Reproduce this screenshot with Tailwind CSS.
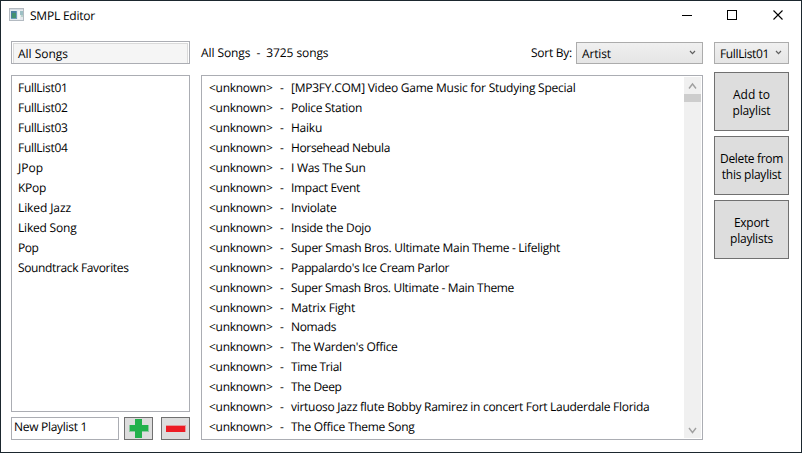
<!DOCTYPE html>
<html lang="en">
<head>
<meta charset="utf-8">
<title>SMPL Editor</title>
<script src="https://cdn.jsdelivr.net/npm/@tailwindcss/browser@4"></script>
</head>
<body class="w-[802px] h-[453px] overflow-hidden bg-white font-['Open_Sans','Noto_Sans',sans-serif] text-[12px] leading-4 text-black [text-rendering:geometricPrecision]">
<div class="w-[802px] h-[453px] border border-[#1b272e] flex flex-col whitespace-nowrap">
  <header class="h-[40px] shrink-0 flex items-start pl-2">
    <svg class="mt-[7px] w-[15px] h-[13px] shrink-0" viewBox="0 0 15 13" shape-rendering="crispEdges">
      <rect width="15" height="13" fill="#b3bac1"/><rect x="1" y="1" width="13" height="1" fill="#d5dce2"/><rect x="1" y="2" width="13" height="10" fill="#e6eaee"/>
      <rect x="2" y="3" width="6" height="8" fill="#6f9dbb"/><rect x="2" y="3" width="5" height="7" fill="#4b7fa0"/><rect x="3" y="5" width="4" height="5" fill="#44916f"/><rect x="9" y="3" width="2" height="8" fill="#f3f5f7"/><rect x="11" y="3" width="3" height="4" fill="#9dbfc4"/><rect x="12" y="7" width="2" height="2" fill="#b9d2cb"/>
    </svg>
    <span class="ml-[6px] mt-[7px]" data-w="65">SMPL Editor</span>
    <svg class="ml-auto mr-[17px] mt-[8px] w-[102px] h-[12px] shrink-0" viewBox="0 0 102 12" fill="none" stroke="#000">
      <path d="M0 6.500H10M45.500 1.500H54.500V10.500H45.500Z" shape-rendering="crispEdges"/><path d="M91.500 1.500L100.500 10.500M100.500 1.500L91.500 10.500" stroke-width="1.100"/>
    </svg>
  </header>
  <main class="flex pl-[10px] items-start">
    <section class="w-[179px] flex flex-col">
      <div class="h-[23px] border border-[#abadb3] p-px pb-0"><div class="h-[20px] border border-b-0 border-[#dadada] bg-[#f5f5f5] pl-1 pt-[2px]"><span class="inline-block" data-w="50">All Songs</span></div></div>
      <div id="playlists" class="mt-[11px] h-[337px] border border-[#abadb3] pt-[4px] pl-[6px]"></div>
      <div class="mt-[5px] flex h-[23px]">
        <div class="w-[108px] border border-[#abadb3] pl-[2px] pt-px"><span class="inline-block" data-w="73">New Playlist 1</span></div>
        <button class="ml-[5px] w-[29px] border border-[#707070] bg-[#ddd]"><svg class="w-[27px] h-[21px]" viewBox="0 0 27 21" shape-rendering="crispEdges"><path d="M4 7h20v7H4z" fill="#8cc9a0"/><path d="M10 1h7v6h6v6h-6v7h-7v-7h-5v-6h5z" fill="#22b14c"/></svg></button>
        <button class="ml-[8px] w-[29px] border border-[#707070] bg-[#ddd]"><svg class="w-[27px] h-[21px]" viewBox="0 0 27 21" shape-rendering="crispEdges"><path d="M4 7h20v7H4z" fill="#e49a9c"/><path d="M4 8h19v6H4z" fill="#ed1c24"/></svg></button>
      </div>
    </section>
    <section class="ml-[11px] w-[502px] flex flex-col">
      <div class="h-[34px] flex items-start">
        <span class="mt-[4px]" data-w="127.5">All Songs&nbsp; -&nbsp; 3725 songs</span>
        <span class="ml-auto mr-[4px] mt-[4px]" data-w="41">Sort By:</span>
        <div class="mt-px w-[127px] h-[22px] border border-[#acacac] bg-linear-to-b from-[#f0f0f0] to-[#e5e5e5] flex justify-between pl-[5px] pt-[3px]"><span data-w="29">Artist</span>
          <svg class="mt-[4px] mr-[6px] w-[7px] h-[5px]" viewBox="0 0 7 5" fill="none" stroke="#606060" stroke-width="1.200"><path d="M1 1L3.500 3.700L6 1"/></svg></div>
      </div>
      <div class="h-[365px] border border-[#abadb3] flex p-px pl-[7px]">
        <div id="songs" class="flex-1 pt-[3.1px]"></div>
        <div class="w-[17px] bg-[#f0f0f0] flex flex-col">
          <svg class="w-[17px] h-[17px]" viewBox="0 0 17 17" fill="none" stroke="#a0a0a0" stroke-width="1.400"><path d="M5 11.500L8.500 7L12 11.500"/></svg>
          <div class="h-[8px] bg-[#cdcdcd]"></div>
          <svg class="mt-auto w-[17px] h-[17px]" viewBox="0 0 17 17" fill="none" stroke="#a0a0a0" stroke-width="1.400"><path d="M5 7L8.500 11.500L12 7"/></svg>
        </div>
      </div>
    </section>
    <section class="ml-[11px] w-[75px] flex flex-col pt-px">
      <div class="h-[22px] border border-[#acacac] bg-linear-to-b from-[#f0f0f0] to-[#e5e5e5] flex justify-between pl-[5px] pt-[3px]"><span data-w="49">FullList01</span>
        <svg class="mt-[4px] mr-[6px] w-[7px] h-[5px]" viewBox="0 0 7 5" fill="none" stroke="#606060" stroke-width="1.200"><path d="M1 1L3.500 3.700L6 1"/></svg></div>
      <button class="mt-[8px] h-[59px] border border-[#707070] bg-[#ddd] flex flex-col items-center justify-center pt-[2px]"><span data-w="37">Add to</span><span data-w="38">playlist</span></button>
      <button class="mt-[5px] h-[59px] border border-[#707070] bg-[#ddd] flex flex-col items-center justify-center pt-[2px]"><span data-w="63">Delete from</span><span data-w="59.5">this playlist</span></button>
      <button class="mt-[5px] h-[59px] border border-[#707070] bg-[#ddd] flex flex-col items-center justify-center pt-[2px]"><span data-w="35">Export</span><span data-w="43">playlists</span></button>
    </section>
  </main>
</div>
<script>
const playlists = [["FullList01",49.5],["FullList02",49.5],["FullList03",49.5],["FullList04",49.5],["JPop",25],["KPop",28],["Liked Jazz",53],["Liked Song",58.5],["Pop",20.5],["Soundtrack Favorites",110.5]];
const songs = [["[MP3FY.COM] Video Game Music for Studying Special",284.5],["Police Station",71],["Haiku",31],["Horsehead Nebula",99],["I Was The Sun",74.5],["Impact Event",69],["Inviolate",45.5],["Inside the Dojo",80],["Super Smash Bros. Ultimate Main Theme - Lifelight",269],["Pappalardo's Ice Cream Parlor",158],["Super Smash Bros. Ultimate - Main Theme",223],["Matrix Fight",64],["Nomads",45],["The Warden's Office",106.5],["Time Trial",50.5],["The Deep",50.5],["virtuoso Jazz flute Bobby Ramirez in concert Fort Lauderdale Florida",358.5],["The Office Theme Song",123.5]];
document.getElementById("playlists").innerHTML = playlists.map(([t,w]) => `<div class="h-5"><span class="inline-block" data-w="${w}">${t}</span></div>`).join("");
document.getElementById("songs").innerHTML = songs.map(([t,w], i) => `<div class="${i === 11 ? "h-[19px]" : "h-5"} flex"><span class="w-[71px]"><span class="inline-block" data-w="63.5">&lt;unknown&gt;</span></span><span class="w-[11px]">-</span><span data-w="${w}">${t}</span></div>`).join("");
// Tracks each label to its nominal width.
const ctx = document.createElement("canvas").getContext("2d");
ctx.font = '12px "Open Sans"';
ctx.textRendering = "geometricPrecision";
document.querySelectorAll("[data-w]").forEach(e => {
  const t = e.textContent;
  e.style.letterSpacing = ((+e.dataset.w - ctx.measureText(t).width) / t.length).toFixed(4) + "px";
});
</script>
</body>
</html>
